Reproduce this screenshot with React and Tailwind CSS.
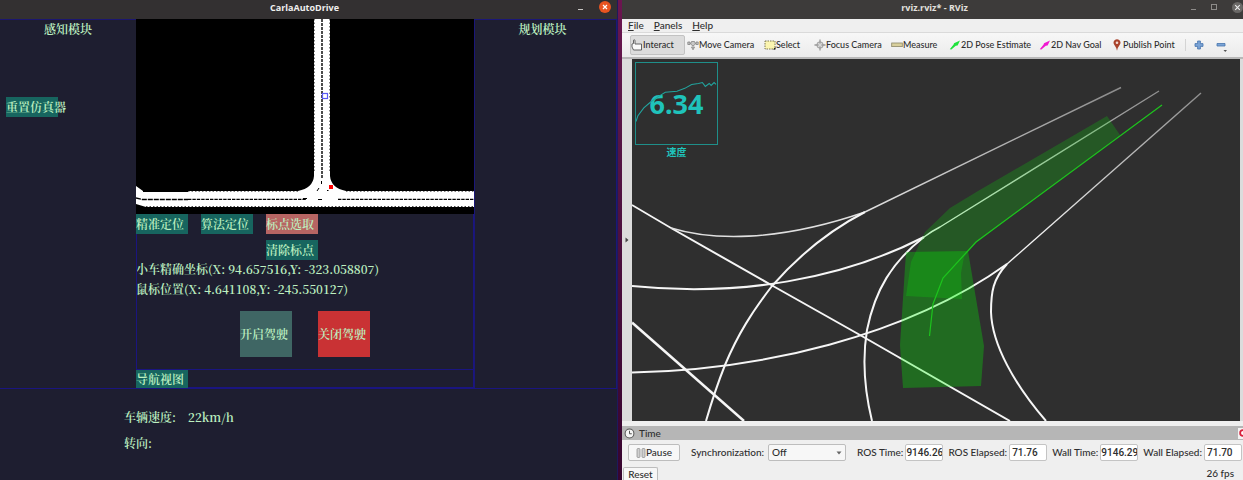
import React from "react";

const han = "font-['Noto_Serif_CJK_SC','Noto_Sans_CJK_SC',serif]";
const chip = "flex h-5 w-[52px] items-center whitespace-nowrap bg-[#17655f] text-left";

function RoadMap() {
  return (
    <svg viewBox="136 19 338 195" preserveAspectRatio="none" className="relative block h-[195px] w-full bg-black" aria-label="地图">
      <path
        d="M314 19H330V176Q331 188 346 191H474V207H146L136 204V186L143 191H298Q313 188 314 176Z"
        fill="#fff"
      />
      <g stroke="#000" fill="none">
        <path d="M322 19V178" strokeWidth="1.4" strokeDasharray="3 1" />
        <path d="M314 19V172M330 19V172" strokeWidth="1" strokeDasharray="1.5 2" />
        <path d="M338 199.3H474M188 199.3H306" strokeWidth="1.2" strokeDasharray="3.4 1" />
        <path d="M136 198L142 199.5H188" strokeWidth="1.3" strokeDasharray="5 1" />
        <path d="M143 191.5H188" strokeWidth="1" />
        <path d="M188 191H300M346 191H474M146 206.8H474" strokeWidth="1" strokeDasharray="1.5 2" />
        <path d="M317 191L319 188M321.5 181V184M327 190.5H328.5M318 199.5H322M303 198.5H307" strokeWidth="1" />
      </g>
      <rect x="322.5" y="93.5" width="5" height="5" fill="#fff" stroke="#5a5af5" strokeWidth="1.2" />
      <rect x="329" y="185" width="4" height="4" fill="#f00" />
    </svg>
  );
}

function CarlaWindow() {
  return (
    <section className={`flex min-w-0 flex-col overflow-hidden bg-[#1e1e30] text-[12px] font-semibold text-[#bdf0c0] ${han}`}>
      <header className="relative flex h-[19px] shrink-0 items-center justify-center bg-[#333031] pr-2 font-['Open_Sans',sans-serif] text-[9px] font-bold text-[#f0efee]">
        <h1 className="-mt-1">CarlaAutoDrive</h1>
        <div className="absolute right-[6px] top-px flex items-center gap-4">
          <button aria-label="最小化" className="flex h-3 w-[5px] items-center">
            <span className="mt-1 h-px w-full bg-[#c8c6c4]" />
          </button>
          <button aria-label="关闭" className="size-[12px] rounded-full bg-[#e95420]">
            <svg viewBox="0 0 12 12" className="size-[12px]">
              <path d="M4 4l4 4M8 4l-4 4" stroke="#fff" strokeWidth="1.2" />
            </svg>
          </button>
        </div>
      </header>

      <div className="grid shrink-0 grid-cols-[136fr_338fr_143fr]">
        <div className="border-t border-[#1b1670]">
          <h2 className="text-center leading-[18px]">感知模块</h2>
          <button className={`${chip} ml-[6px] mt-[59px]`}>重置仿真器</button>
        </div>

        <div className="outline outline-1 -outline-offset-1 outline-[#1a1580]">
          <RoadMap />
          <div className="relative grid grid-cols-[52px_52px_52px] gap-x-[13px] gap-y-[6px]">
            <button className={chip}>精准定位</button>
            <button className={chip}>算法定位</button>
            <button className="flex h-5 w-[52px] items-center whitespace-nowrap bg-[#b76563] text-left">标点选取</button>
            <button className={`${chip} col-start-3`}>清除标点</button>
          </div>
          <p className="h-5 whitespace-nowrap leading-[18px]">小车精确坐标(X: 94.657516,Y: -323.058807)</p>
          <p className="h-5 whitespace-nowrap leading-[18px]">鼠标位置(X: 4.641108,Y: -245.550127)</p>
          <div className="flex justify-center gap-[26px] pb-[12px] pt-[11px]">
            <button className="h-[46px] w-[52px] whitespace-nowrap bg-[#3f6664] text-left">开启驾驶</button>
            <button className="h-[46px] w-[52px] whitespace-nowrap bg-[#c93234] text-left">关闭驾驶</button>
          </div>
          <div className="border-t border-[#1a1580]">
            <button className="relative flex h-[18px] w-[52px] items-center whitespace-nowrap bg-[#17655f] text-left">导航视图</button>
          </div>
        </div>

        <div className="border-x border-t border-[#1b1778]">
          <h2 className="pr-[6px] text-center leading-[18px]">规划模块</h2>
        </div>
      </div>

      <div className="flex-1 border-t border-[#1a1580] pl-[124px] pt-4">
        <dl className="grid grid-cols-[52px_auto] gap-x-3 leading-[24px]">
          <dt className="h-[26px]">车辆速度:</dt>
          <dd>22km/h</dd>
          <dt className="h-[26px]">转向:</dt>
          <dd />
        </dl>
      </div>
    </section>
  );
}

function HandIcon() {
  return (
    <svg viewBox="0 0 12 12" className="size-[12px] shrink-0">
      <path d="M1 5L2.5 4.5V1.2Q3.2 .4 4 1.2V5H10.5V11H2.5L1 8Z" fill="#fafafa" stroke="#555" strokeWidth=".9" />
    </svg>
  );
}
function MoveIcon() {
  return (
    <svg viewBox="0 0 12 12" className="size-[12px] shrink-0" fill="#c8c8c8" stroke="#777" strokeWidth=".7">
      <path d="M4.5 2.5H7.5L8.5 5L6 7L3.5 5ZM.8 3H3V5.5H.8ZM9 3H11.2V5.5H9ZM4.5 8H7.5L6 10.8Z" />
    </svg>
  );
}
function SelectIcon() {
  return (
    <svg viewBox="0 0 12 12" className="size-[12px] shrink-0">
      <rect x="1" y="2" width="10" height="8" fill="#fbf5b0" stroke="#7d7850" strokeDasharray="1.5 1" />
      <path d="M9 10.5H11.5V8Z" fill="#111" />
    </svg>
  );
}
function FocusIcon() {
  return (
    <svg viewBox="0 0 12 12" className="size-[12px] shrink-0" fill="none" stroke="#999">
      <circle cx="6" cy="6" r="3.2" fill="#d6d6d6" strokeWidth=".9" />
      <path d="M6 .5V4.5M6 7.5V11.5M.5 6H4.5M7.5 6H11.5" strokeWidth="1.3" />
    </svg>
  );
}
function MeasureIcon() {
  return (
    <svg viewBox="0 0 12 12" className="size-[12px] shrink-0">
      <rect x=".7" y="4" width="10.6" height="3.6" fill="#d8cf9c" stroke="#8c8768" strokeWidth=".8" />
    </svg>
  );
}
function ArrowIcon({ color }) {
  return (
    <svg viewBox="0 0 12 12" className="size-[12px] shrink-0">
      <path d="M.8 10.2L4.6 5.5L5 4.2L11 1.4L8.6 6.4L6.8 6.8L2.4 10.4Z" fill={color} />
    </svg>
  );
}
function PinIcon() {
  return (
    <svg viewBox="0 0 12 12" className="size-[12px] shrink-0">
      <path d="M6 11.8Q5.4 8.5 3.4 6Q1.4 3 3.8 1Q6 -.4 8.2 1Q10.6 3 8.6 6Q6.6 8.5 6 11.8Z" fill="#a9432c" />
      <circle cx="6" cy="3.8" r="1.3" fill="#f3dcd4" />
    </svg>
  );
}

const tools = [
  ["Move Camera", <MoveIcon />],
  ["Select", <SelectIcon />],
  ["Focus Camera", <FocusIcon />],
  ["Measure", <MeasureIcon />],
  ["2D Pose Estimate", <ArrowIcon color="#1fe23c" />],
  ["2D Nav Goal", <ArrowIcon color="#f018d0" />],
  ["Publish Point", <PinIcon />],
];

function Scene() {
  return (
    <svg viewBox="632 59 608 362" preserveAspectRatio="none" className="absolute inset-0 size-full" aria-label="3D view">
      <defs>
        <linearGradient id="fade" gradientUnits="userSpaceOnUse" x1="0" y1="90" x2="0" y2="240">
          <stop offset="0" stopColor="#8c8c8c" />
          <stop offset="1" stopColor="#f4f4f4" />
        </linearGradient>
      </defs>
      <g fill="none" stroke="#f6f6f6" strokeWidth="2" strokeLinejoin="round">
        <path d="M632 205L671 228" strokeWidth="1.6" />
        <path d="M671 228L773 286L860 335L1010 421" />
        <path d="M671 228C710 240 775 243 865 212" strokeWidth="1.6" stroke="#e0e0e0" />
        <path d="M865 212C832 229 800 254 772 286C752 312 738 334 725 365Q715 390 706 421" />
        <path d="M632 286C740 297 842 279 924 237" />
        <path d="M924 237C892 262 875 290 867 330C862 360 864 388 872 421" />
        <path d="M632 372.5C760 370 905 337 1007 264" />
        <path d="M1007 264C993 279 991 292 991 312C992 345 1015 385 1046 421" />
        <path d="M632 322.5L744 421" strokeWidth="2.5" />
      </g>
      <g fill="none" stroke="url(#fade)" strokeWidth="1.4">
        <path d="M865 212L1121 87.5" />
        <path d="M924 237Q932 231 940 227L1159 91" />
        <path d="M1007 264L1201 93" />
      </g>
      <path d="M1107 116L1120 135L976 243L964 257L961 273L962 299L906 296L911 262L925 232L950 208L978 191Z" fill="#00ff00" fillOpacity=".2" />
      <path d="M906 252L968 251L984 346L981 386L903 388L900 345Z" fill="#00ff00" fillOpacity=".29" />
      <path d="M929.5 336L933 304L943 278L976 242L1162 105" fill="none" stroke="#1dc41d" strokeWidth="1.2" />
    </svg>
  );
}

function Gauge() {
  return (
    <div className="absolute left-[3px] top-[3px] w-[83px] text-center font-['Noto_Sans','Noto_Sans_CJK_SC',sans-serif] font-bold text-[#1fc3bb]">
      <div className="relative flex h-[83px] items-center justify-center border border-[#1f8f8a]">
        <svg viewBox="0 0 83 83" className="absolute inset-0 size-full" fill="none" stroke="#22a49e" strokeWidth="1.1">
          <path d="M0 60L2 54L8 46L15 40L22 35L30 30L42 29L50 26L57 22L64 21L68 20L71 24L75 21L77 23L80 20L82 22" />
        </svg>
        <span className="text-[27px] leading-none">6.34</span>
      </div>
      <p className="text-[10px] leading-[14px]">速度</p>
    </div>
  );
}

function Field({ id, label, value, clipped }) {
  return (
    <div className="flex shrink-0 items-center gap-[2px]">
      <label htmlFor={id} className="whitespace-nowrap">{label}</label>
      <input
        id={id}
        readOnly
        defaultValue={value}
        className={`h-[17px] w-[38px] rounded-[2px] border border-[#c4c4c4] bg-white font-['Roboto',sans-serif] outline-none ${clipped ? "text-right" : "pl-[2px]"}`}
      />
    </div>
  );
}

function RvizWindow() {
  return (
    <section className="flex min-w-0 flex-col overflow-hidden bg-[#efefef] font-['Lato',sans-serif] text-[10px] font-medium text-[#2e2e2e]">
      <header className="relative flex h-[19px] shrink-0 items-center justify-center bg-[#3d3b3a] pl-1 font-['Open_Sans',sans-serif] text-[9px] font-bold text-[#e2e0de]">
        <h1 className="-mt-1">rviz.rviz* - RViz</h1>
        <div className="absolute right-0 top-px flex items-center gap-[15px]">
          <button aria-label="Minimize" className="flex h-3 w-[5px] items-center">
            <span className="mt-1 h-px w-full bg-[#8d8b89]" />
          </button>
          <button aria-label="Maximize" className="size-[6px] border border-[#8d8b89]" />
          <button aria-label="Close" className="size-[11px] rounded-full bg-[#6a6866]">
            <svg viewBox="0 0 12 12" className="size-[11px]">
              <path d="M3.5 3.5l5 5M8.5 3.5l-5 5" stroke="#eee" strokeWidth="1.2" />
            </svg>
          </button>
        </div>
      </header>

      <nav className="flex h-[14px] shrink-0 items-center gap-[10px] border-b border-[#dadada] pl-[6px]">
        <button><u>F</u>ile</button>
        <button><u>P</u>anels</button>
        <button><u>H</u>elp</button>
      </nav>

      <div className="flex h-[26px] shrink-0 items-center border-b-2 border-[#b8b8b8] bg-gradient-to-b from-[#f7f7f7] to-[#ebebeb] pl-2 text-[9px]">
        <div className="grid grid-cols-[55px_77px_50px_77px_58px_90px_72px_76px] items-center">
          <button className="flex h-5 items-center whitespace-nowrap rounded-[2px] border border-[#c2c2c2] bg-[#dcdcdc]">
            <HandIcon />Interact
          </button>
          {tools.map(([name, icon]) => (
            <button key={name} className="flex h-5 items-center whitespace-nowrap pl-[2px]">
              {icon}{name}
            </button>
          ))}
        </div>
        <div className="flex h-3 flex-1 items-center gap-3 border-l border-[#d4d4d4] pl-2">
          <button aria-label="Add tool">
            <svg viewBox="0 0 10 10" className="size-[10px]"><path d="M3.6 1H6.4V3.6H9V6.4H6.4V9H3.6V6.4H1V3.6H3.6Z" fill="#7ba4d6" stroke="#4673ac" strokeWidth=".8" /></svg>
          </button>
          <button aria-label="Remove tool">
            <svg viewBox="0 0 14 14" className="size-[14px]"><path d="M1 5.5H9V8H1Z" fill="#7ba4d6" stroke="#4673ac" strokeWidth=".8" /><path d="M7.5 12H11L9.25 14Z" fill="#555" /></svg>
          </button>
        </div>
      </div>

      <div className="flex min-h-[120px] flex-1 bg-[#dcdcdc] pr-[3px]">
        <button aria-label="Show panels" className="flex w-[10px] shrink-0 items-center justify-center">
          <svg viewBox="0 0 4 6" className="h-[6px] w-[4px]"><path d="M.5 .5L3.5 3L.5 5.5Z" fill="#444" /></svg>
        </button>
        <div className="relative flex-1 bg-[#2f2f2f]">
          <Scene />
          <Gauge />
        </div>
      </div>

      <div className="mt-[5px] flex h-[14px] shrink-0 items-center gap-1 bg-[#b6b6b6] pl-[2px]">
        <svg viewBox="0 0 12 12" className="size-[11px]">
          <circle cx="6" cy="6" r="4.8" fill="#f5f5f5" stroke="#555" strokeWidth="1.1" />
          <path d="M6 3V6.3H8.5" fill="none" stroke="#444" />
        </svg>
        <h2 className="flex-1">Time</h2>
        <button aria-label="Close panel" className="flex h-[11px] w-[5px] items-center overflow-hidden bg-[#f3f3f3]">
          <svg viewBox="0 0 9 9" className="ml-px size-[8px] shrink-0"><circle cx="4.5" cy="4.5" r="3.2" fill="#fff" stroke="#d8203c" strokeWidth="2" /></svg>
        </button>
      </div>

      <div className="h-10 shrink-0">
        <div className="flex items-center gap-[5px] pl-[6px] pt-1">
          <button className="mr-[6px] flex h-[17px] w-[52px] shrink-0 items-center justify-center rounded-[2px] border border-[#bdbdbd] bg-[#f7f7f7]">
            <svg viewBox="0 0 10 10" className="size-[10px]" fill="#d0d0d0" stroke="#888" strokeWidth=".7"><rect x="1" y=".5" width="3" height="9" rx="1" /><rect x="6" y=".5" width="3" height="9" rx="1" /></svg>
            Pause
          </button>
          <div className="mr-[6px] flex shrink-0 items-center gap-1">
            <label htmlFor="sync">Synchronization:</label>
            <div className="relative">
              <select id="sync" className="block h-[17px] w-[78px] appearance-none rounded-[2px] border border-[#bdbdbd] bg-[#f7f7f7] pl-[3px]">
                <option>Off</option>
              </select>
              <svg viewBox="0 0 6 4" className="pointer-events-none absolute right-1 top-[7px] h-[4px] w-[6px]"><path d="M.5 .5H5.5L3 3.5Z" fill="#666" /></svg>
            </div>
          </div>
          <Field id="ros-time" label="ROS Time:" value="9146.26" clipped />
          <Field id="ros-elapsed" label="ROS Elapsed:" value="71.76" />
          <Field id="wall-time" label="Wall Time:" value="9146.29" clipped />
          <Field id="wall-elapsed" label="Wall Elapsed:" value="71.70" />
        </div>
        <div className="flex items-start justify-between pl-px pr-[9px] pt-[6px]">
          <button className="h-[13px] w-[35px] rounded-t-[2px] border border-b-0 border-[#bdbdbd] bg-[#f7f7f7] leading-[12px]">Reset</button>
          <span className="leading-[12px]">26 fps</span>
        </div>
      </div>
    </section>
  );
}

export default function App() {
  return (
    <main className="grid h-screen min-h-[480px] grid-cols-[617fr_5px_621fr] overflow-hidden">
      <CarlaWindow />
      <div className="border-l border-[#1d1a5c] bg-gradient-to-b from-[#6c1550] via-[#5a1748] via-20% to-[#37052f]" />
      <RvizWindow />
    </main>
  );
}
